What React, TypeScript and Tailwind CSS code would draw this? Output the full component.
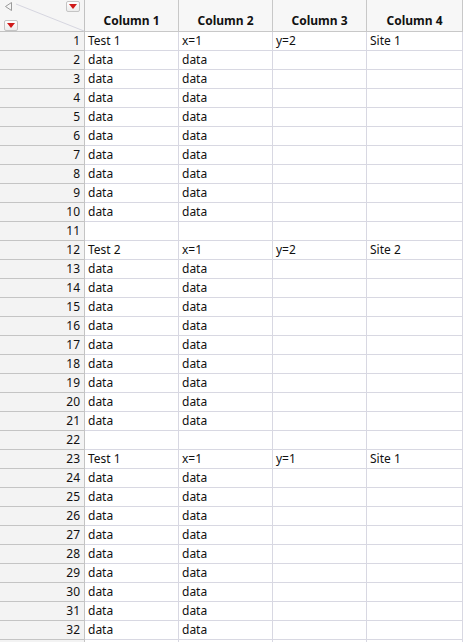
import React from "react";

type Row = [string, string, string, string];

const block = (title: string, x: string, y: string, site: string): Row[] => [
  [title, x, y, site],
  ...Array.from({ length: 9 }, (): Row => ["data", "data", "", ""]),
];

const rows: Row[] = [
  ...block("Test 1", "x=1", "y=2", "Site 1"),
  ["", "", "", ""],
  ...block("Test 2", "x=1", "y=2", "Site 2"),
  ["", "", "", ""],
  ...block("Test 1", "x=1", "y=1", "Site 1"),
  ["", "", "", ""],
];

const RedMenu = ({ className = "" }: { className?: string }) => (
  <div
    className={`absolute w-[14px] h-[11px] rounded-[2px] border border-[#c4c4c4] bg-gradient-to-b from-white to-[#ececec] flex items-center justify-center ${className}`}
  >
    <svg width="8" height="5" viewBox="0 0 8 5">
      <path d="M0 0 H8 L4 5 Z" fill="#d01a1a" />
    </svg>
  </div>
);

export default function App() {
  return (
    <div
      className="w-[463px] h-[642px] overflow-hidden bg-white text-[12px] text-[#111] leading-none"
      style={{ fontFamily: '"Segoe UI", "Noto Sans", sans-serif' }}
    >
      <div className="grid grid-cols-[85px_94px_94px_94px_96px]">
        {/* corner cell */}
        <div className="relative h-[32px] bg-[#f5f5f5] border-r border-b border-[#c2c2c2]">
          <svg className="absolute left-0 top-0" width="85" height="32" viewBox="0 0 85 32">
            <line x1="16" y1="4" x2="84" y2="31" stroke="#d6d6e0" strokeWidth="1" />
            <path d="M11.5 2.5 L5.5 6.5 L11.5 10.5 Z" fill="none" stroke="#9a9a9a" strokeWidth="1" />
          </svg>
          <RedMenu className="left-[66px] top-[1px]" />
          <RedMenu className="left-[4px] top-[20px]" />
        </div>
        {["Column 1", "Column 2", "Column 3", "Column 4"].map((c) => (
          <div
            key={c}
            className="h-[32px] bg-[#f7f7f7] border-r border-b border-[#c8c8c8] flex items-end justify-center pb-[4px] font-bold"
          >
            {c}
          </div>
        ))}

        {rows.map((r, i) => (
          <React.Fragment key={i}>
            <div className="h-[19px] bg-[#f3f3f3] border-r border-b border-[#c4c4c4] flex items-center justify-end pr-[4px] text-[12px]">
              {i < 32 ? i + 1 : ""}
            </div>
            {r.map((v, j) => (
              <div
                key={j}
                className="h-[19px] border-r border-b border-[#d8d8e2] flex items-center pl-[3px] whitespace-nowrap"
              >
                {v}
              </div>
            ))}
          </React.Fragment>
        ))}
      </div>
    </div>
  );
}
